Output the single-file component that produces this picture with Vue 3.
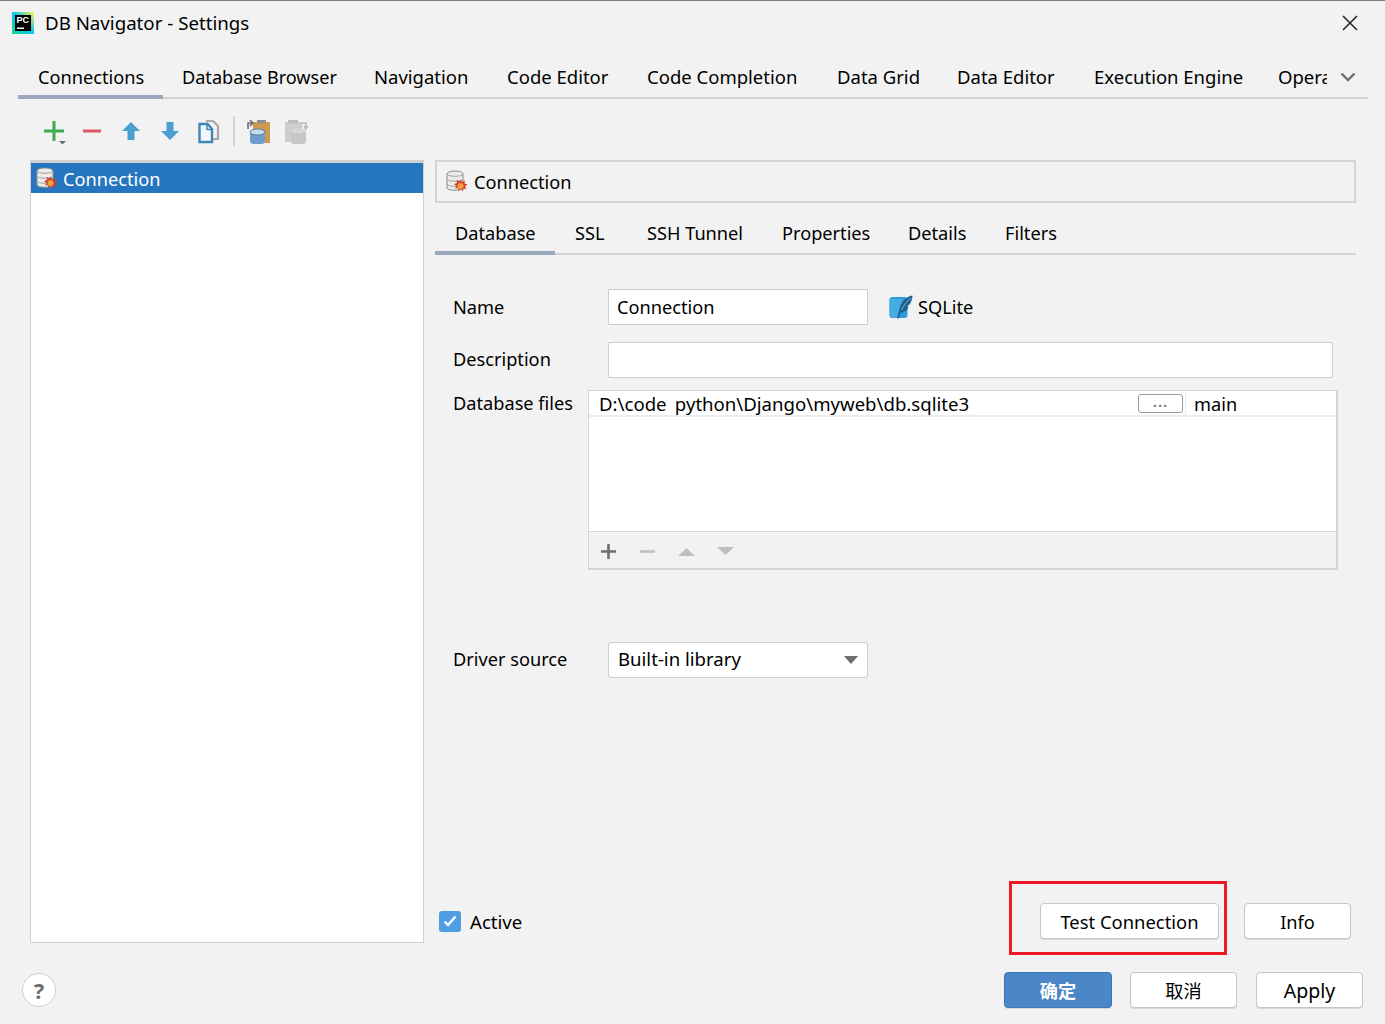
<script setup>
const tabs = [
  { label: 'Connections', width: 145 },
  { label: 'Database Browser', width: 192, size: 18.1 },
  { label: 'Navigation', width: 133 },
  { label: 'Code Editor', width: 140 },
  { label: 'Code Completion', width: 190 },
  { label: 'Data Grid', width: 120 },
  { label: 'Data Editor', width: 137 },
  { label: 'Execution Engine', width: 184 }
]
const subTabs = [
  { label: 'Database', width: 120 },
  { label: 'SSL', width: 72 },
  { label: 'SSH Tunnel', width: 135 },
  { label: 'Properties', width: 126 },
  { label: 'Details', width: 97 },
  { label: 'Filters', width: 90 }
]
</script>

<template>
  <div class="dialog">
    <header class="titlebar">
      <svg class="logo" width="22" height="22" viewBox="0 0 22 22">
        <defs>
          <linearGradient id="pcg" x1="0" y1="1" x2="1" y2="0">
            <stop offset="0" stop-color="#21d789"/><stop offset="0.5" stop-color="#07c3f2"/><stop offset="1" stop-color="#fcf84a"/>
          </linearGradient>
        </defs>
        <rect width="22" height="22" fill="url(#pcg)"/>
        <rect x="3" y="3" width="16" height="16" fill="#000"/>
        <text x="4.5" y="11" class="logotext">PC</text>
        <rect x="5" y="15.500" width="7" height="1.500" fill="#fff"/>
      </svg>
      <span class="title">DB Navigator - Settings</span>
      <svg class="close" width="16" height="16" viewBox="0 0 16 16"><path d="M1 1l14 14M15 1L1 15" stroke="#222" stroke-width="1.500" fill="none"/></svg>
    </header>

    <nav class="tabs">
      <span v-for="(t,i) in tabs" :key="t.label" class="tab" :class="{active:i===0}" :style="{width: t.width + 'px', fontSize: t.size ? t.size + 'px' : null}">{{ t.label }}</span>
      <span class="tab clipped"><span class="clip">Operations</span></span>
      <svg class="chev" width="16" height="10" viewBox="0 0 16 10"><path d="M1.500 1.500l6.500 6.500 6.500-6.500" stroke="#6e6e6e" stroke-width="2.400" fill="none"/></svg>
    </nav>

    <div class="toolbar">
      <svg class="t-plus" width="28" height="28" viewBox="0 0 28 28"><path d="M4 14h20M14 4v20" stroke="#3fa950" stroke-width="3" fill="none"/><path d="M19 24h7l-3.500 3.500z" fill="#6e6e6e"/></svg>
      <svg width="20" height="28" viewBox="0 0 20 28"><path d="M1 14h18" stroke="#db5860" stroke-width="3"/></svg>
      <svg width="20" height="28" viewBox="0 0 20 28"><path d="M10 5l9 9h-5.500v9h-7v-9H1z" fill="#4b9ed0"/></svg>
      <svg width="20" height="28" viewBox="0 0 20 28"><path d="M6.500 5h7v9H19l-9 9-9-9h5.500z" fill="#4b9ed0"/></svg>
      <svg class="t-copy" width="23" height="28" viewBox="0 0 23 28"><path d="M8 4h7l5 5v13h-5" fill="none" stroke="#a8a8a8" stroke-width="2.200"/><path d="M1.500 7h8l4.500 5v13H1.500z" fill="#f5f8fa" stroke="#3f86b8" stroke-width="2.400"/><path d="M9 7v5.500h5" fill="none" stroke="#3f86b8" stroke-width="1.500"/></svg>
      <i class="tool-sep"></i>
      <svg width="24" height="28" viewBox="0 0 24 28"><rect x="7" y="5" width="17" height="21" fill="#cf9a50"/><rect x="11" y="3" width="9" height="3.500" fill="#8f8f8f"/><path d="M2 12V6h4M4 3l3 3-3 3" fill="none" stroke="#6f6f6f" stroke-width="1.600"/><rect x="4" y="13" width="15" height="14" rx="3.500" fill="#6e9fcc"/><ellipse cx="11.500" cy="15" rx="7.500" ry="3" fill="#c4dbee"/><ellipse cx="11.500" cy="15" rx="7.500" ry="3" fill="none" stroke="#3f6f9c" stroke-width="0.800"/></svg>
      <svg class="t-clip2" width="24" height="28" viewBox="0 0 24 28"><rect x="1" y="5" width="17" height="20" fill="#cdcdcd"/><rect x="4" y="3" width="10" height="3.500" fill="#bdbdbd"/><path d="M17 6h5v5M20 9l2 3 2-3" fill="none" stroke="#bdbdbd" stroke-width="1.600"/><rect x="7" y="12" width="15" height="15" rx="3.500" fill="#c6c6c6"/><ellipse cx="14.500" cy="14" rx="7.500" ry="2.500" fill="#d6d6d6"/></svg>
    </div>

    <main class="body">
      <aside class="list">
        <div class="list-item">
          <svg class="dbicon" width="22" height="23" viewBox="0 0 22 23"><path d="M1 4c0-4 16-4 16 0v14c0 3-16 3-16 0z" fill="#ececec" stroke="#8c8c8c"/><path d="M1 4c0 3 16 3 16 0M1 9c0 3 16 3 16 0M1 14c0 3 16 3 16 0" fill="none" stroke="#a0a0a0"/><path d="M14.500 9.500l1.500 2.500 3-1.500-.5 3 3 1-2.500 2 1.500 2.500-3-.5-.5 3-2-2.500-2.500 2-.5-3-3 .5 1.500-2.500-2.500-2 3-1-.5-3 3 1.500z" fill="#cf3f2c"/><circle cx="14.500" cy="16" r="3" fill="#f0a23e"/></svg>
          <span>Connection</span>
        </div>
      </aside>

      <section class="panel">
        <div class="panel-head">
          <svg class="dbicon" width="22" height="23" viewBox="0 0 22 23"><path d="M1 4c0-4 16-4 16 0v14c0 3-16 3-16 0z" fill="#ececec" stroke="#8c8c8c"/><path d="M1 4c0 3 16 3 16 0M1 9c0 3 16 3 16 0M1 14c0 3 16 3 16 0" fill="none" stroke="#a0a0a0"/><path d="M14.500 9.500l1.500 2.500 3-1.500-.5 3 3 1-2.500 2 1.500 2.500-3-.5-.5 3-2-2.500-2.500 2-.5-3-3 .5 1.500-2.500-2.500-2 3-1-.5-3 3 1.500z" fill="#cf3f2c"/><circle cx="14.500" cy="16" r="3" fill="#f0a23e"/></svg>
          <span>Connection</span>
        </div>

        <nav class="subtabs">
          <span v-for="(t,i) in subTabs" :key="t.label" class="subtab" :class="{active:i===0}" :style="{width: t.width + 'px'}">{{ t.label }}</span>
        </nav>

        <div class="form">
          <div class="row row-name">
            <label>Name</label>
            <div class="input name-input">Connection</div>
            <svg class="feather" width="24" height="24" viewBox="0 0 24 24"><rect x="0.500" y="2" width="18" height="21" rx="3" fill="#2f9bdc"/><path d="M0.500 4h14c-3 4-5 9-6 19H4c-2 0-3.500-1-3.500-3z" fill="#45ace6"/><path d="M23.500 0.500c-7 1-11.500 7-13 14l-2.500 9h1.500l2-6c3 0 7-2 8-6l-2 0 3-2c2-3 3-6 3-9z" fill="#1f5f8c"/><path d="M22 3c-4 3-7 7-9.500 12" stroke="#7fb6d8" fill="none"/></svg>
            <span class="dbtype">SQLite</span>
          </div>
          <div class="row row-desc">
            <label>Description</label>
            <div class="input desc-input"></div>
          </div>
          <div class="row row-files">
            <label class="files-label">Database files</label>
            <div class="files">
              <div class="files-row">
                <span class="path">D:\code<span class="under">_</span>python\Django\myweb\db.sqlite3</span>
                <span class="dots">...</span>
                <span class="alias">main</span>
              </div>
              <div class="files-blank"></div>
              <div class="files-tools">
                <svg width="17" height="17" viewBox="0 0 17 17"><path d="M1 8.500h15M8.500 1v15" stroke="#6e6e6e" stroke-width="2.600"/></svg>
                <svg width="17" height="17" viewBox="0 0 17 17"><path d="M1 8.500h15" stroke="#c0c0c0" stroke-width="2.600"/></svg>
                <svg width="17" height="17" viewBox="0 0 17 17"><path d="M0 13L8.500 5 17 13z" fill="#bfbfbf"/></svg>
                <svg width="17" height="17" viewBox="0 0 17 17"><path d="M0 4h17L8.500 12z" fill="#bfbfbf"/></svg>
              </div>
            </div>
          </div>
          <div class="row row-driver">
            <label>Driver source</label>
            <div class="select">
              <span class="select-text">Built-in library</span>
              <svg width="14" height="8" viewBox="0 0 14 8"><path d="M0 0h14L7 8z" fill="#6e6e6e"/></svg>
            </div>
          </div>
        </div>

        <div class="panel-foot">
          <span class="check"><svg width="14" height="12" viewBox="0 0 14 12"><path d="M1.500 6.500l3.500 3.500 7.500-8.500" stroke="#fff" stroke-width="2.400" fill="none"/></svg></span>
          <span class="active-label">Active</span>
          <button class="btn test">Test Connection</button>
          <button class="btn info">Info</button>
        </div>
      </section>
    </main>

    <footer class="footer">
      <span class="help">?</span>
      <button class="btn ok">确定</button>
      <button class="btn cancel">取消</button>
      <button class="btn apply">Apply</button>
    </footer>

    <div class="annotation"></div>
  </div>
</template>

<style>
html, body { margin: 0; background: #f2f2f2; }
</style>

<style scoped>
.dialog {
  position: relative;
  width: 1385px;
  height: 1024px;
  box-sizing: border-box;
  border-top: 1px solid #7a7a7a;
  background: #f2f2f2;
  color: #000;
  font-family: "Noto Sans", "Noto Sans CJK SC", sans-serif;
  font-size: 18.2px;
  line-height: 26px;
  overflow: hidden;
}
.titlebar { height: 44px; display: flex; align-items: center; padding: 0 27px 0 12px; }
.logo { flex: none; }
.logotext { font: 700 9px "Liberation Sans", sans-serif; fill: #fff; }
.title { margin-left: 11px; flex: 1; font-size: 18.7px; }
.close { flex: none; }

.tabs { margin: 9px 17px 0 18px; height: 45px; display: flex; align-items: flex-start; border-bottom: 2px solid #d1d1d1; box-sizing: border-box; position: relative; font-size: 18.5px; }
.tab { padding: 0 0 0 19px; height: 45px; line-height: 46px; box-sizing: border-box; white-space: nowrap; flex: none; }
.tab.active { border-bottom: 4px solid #9ba9bd; height: 45px; padding-left: 20px; font-size: 18.2px; }
.tab.clipped { width: 68px; }
.clip { display: block; width: 49px; overflow: hidden; }
.chev { margin-left: 13px; margin-top: 3px; flex: none; align-self: center; }

.toolbar { margin: 16px 0 0 40px; height: 32px; display: flex; align-items: center; gap: 19px; }
.toolbar svg { flex: none; }
.t-plus { margin-right: -5px; }
.t-copy { margin-left: -1px; margin-right: 1px; }
.tool-sep { width: 2px; height: 30px; background: #d4d4d4; margin: 0 -8px; }
.t-clip2 { margin-left: -5px; }

.body { margin: 13px 0 0 30px; display: flex; align-items: flex-start; gap: 11px; }
.list { width: 394px; height: 783px; box-sizing: border-box; background: #fff; border: 1px solid #d0d0d0; border-top-width: 3px; }
.list-item { height: 30px; display: flex; align-items: center; background: #2675bf; color: #fff; padding-left: 5px; gap: 5px; }
.list-item span { position: relative; top: 1px; }
.dbicon { flex: none; }

.panel { width: 921px; height: 783px; display: flex; flex-direction: column; }
.panel-head { height: 43px; box-sizing: border-box; border: 2px solid #d4d4d4; display: flex; align-items: center; padding-left: 9px; gap: 6px; }

.subtabs { margin-top: 6px; height: 46px; box-sizing: border-box; display: flex; border-bottom: 2px solid #d4d4d4; }
.subtab { padding-left: 20px; height: 45px; line-height: 48px; white-space: nowrap; box-sizing: border-box; flex: none; }
.subtab.active { border-bottom: 4px solid #9ba9bd; height: 46px; }

.form { flex: 1; padding: 34px 0 0 18px; }
.row { display: flex; align-items: center; }
.row label { flex: none; width: 155px; }
.input { background: #fff; box-sizing: border-box; height: 36px; line-height: 34px; border: 1px solid #cdcdcd; padding-left: 8px; border-radius: 1px; }
.name-input { width: 260px; }
.desc-input { width: 725px; }
.feather { margin-left: 21px; }
.dbtype { margin-left: 5px; }
.row-desc { margin-top: 17px; }
.row-desc label, .row-driver label { margin-top: -2px; }
.row-files { margin-top: 12px; align-items: flex-start; }
.row .files-label { width: 135px; }
.files { width: 750px; height: 180px; box-sizing: border-box; border: 2px solid #d4d4d4; border-width: 1px 2px 2px 1px; display: flex; flex-direction: column; background: #fff; }
.files-row { height: 26px; box-sizing: border-box; border-bottom: 2px solid #ececec; display: flex; align-items: center; padding-left: 10px; }
.path { flex: 1; font-size: 18.6px; white-space: nowrap; padding-top: 2px; height: 24px; line-height: 24px; }
.under { color: transparent; }
.dots { width: 45px; height: 19px; box-sizing: border-box; border: 1px solid #9a9a9a; border-radius: 3px; font: 700 15px/13px "Liberation Sans", sans-serif; letter-spacing: 1px; color: #808080; text-align: center; }
.alias { width: 151px; box-sizing: border-box; margin-left: 2px; border-left: 1px solid #ececec; padding: 1px 0 0 8px; height: 24px; line-height: 24px; }
.files-blank { flex: 1; }
.files-tools { height: 37px; box-sizing: border-box; border-top: 1px solid #d4d4d4; background: #f2f2f2; display: flex; align-items: center; gap: 22px; padding: 2px 0 0 11px; }
.row-driver { margin-top: 72px; }
.select { width: 260px; height: 36px; box-sizing: border-box; background: #fff; border: 1px solid #cdcdcd; border-radius: 3px; display: flex; align-items: center; justify-content: space-between; padding: 0 9px; }
.select-text { margin-top: -2px; font-size: 18.6px; }

.panel-foot { height: 36px; margin-bottom: 4px; display: flex; align-items: center; padding-left: 4px; }
.check { width: 22px; height: 21px; border-radius: 3px; background: #4f9ee3; display: flex; align-items: center; justify-content: center; }
.active-label { margin-left: 9px; flex: 1; font-size: 18.6px; padding-top: 2px; }

.btn { font: inherit; color: #000; background: #fff; border: 1px solid #c6c6c6; border-radius: 4px; box-sizing: border-box; height: 36px; padding: 0; box-shadow: 0 1px 0 #d8d8d8; }
.test { width: 179px; font-size: 18.4px; padding-top: 2px; }
.info { width: 107px; margin: 0 5px 0 25px; padding-top: 2px; }

.footer { margin-top: 29px; padding: 0 22px; display: flex; align-items: center; }
.help { width: 34px; height: 34px; box-sizing: border-box; border: 1px solid #cfcfcf; border-radius: 50%; background: #fff; color: #6e6e6e; font: 700 22px/32px "Noto Sans", sans-serif; text-align: center; margin-right: auto; }
.ok { width: 108px; background: #4a86c8; color: #fff; border-color: #3f76b5; font-weight: 700; padding-top: 2px; }
.cancel { width: 107px; margin-left: 18px; padding-top: 2px; }
.apply { width: 107px; margin-left: 19px; font-size: 19.5px; padding-top: 1px; }

.annotation { position: absolute; left: 1009px; top: 880px; width: 218px; height: 74px; box-sizing: border-box; border: 3px solid #ed1c24; pointer-events: none; }
</style>
